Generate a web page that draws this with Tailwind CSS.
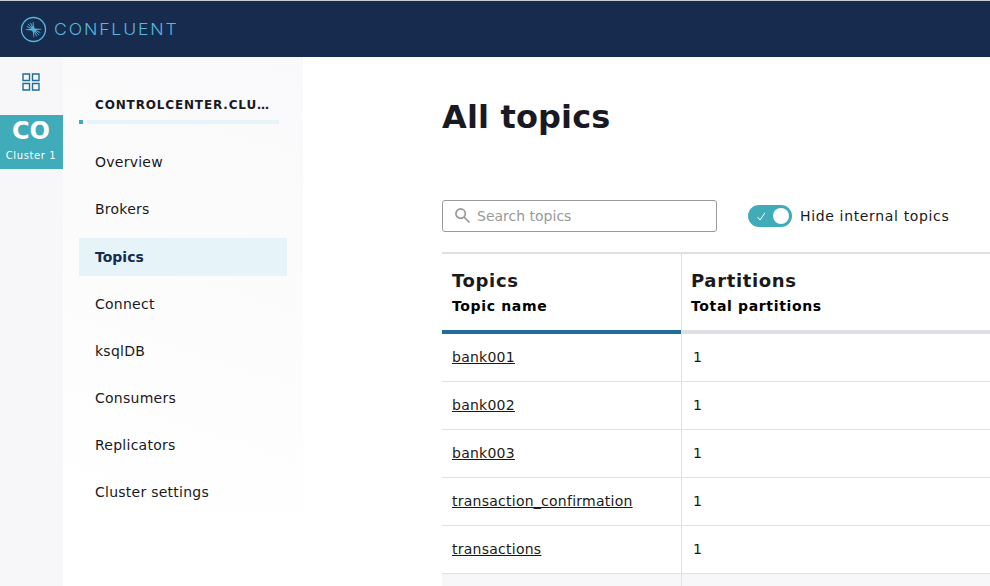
<!DOCTYPE html>
<html lang="en">
<head>
<meta charset="utf-8">
<title>All topics</title>
<script src="https://cdn.jsdelivr.net/npm/@tailwindcss/browser@4"></script>
</head>
<body class="flex h-screen flex-col overflow-hidden bg-white font-['DejaVu_Sans',sans-serif] text-[14px] leading-5 text-[#191924]">
<header class="flex h-[57px] shrink-0 items-center border-t border-[#c9cdd0] bg-[#172b4f] pl-5">
  <svg class="size-[27px]" viewBox="0 0 27 27" fill="none" stroke="#57b8dc">
    <circle cx="13.5" cy="13.5" r="12" stroke-width="1.3"/>
    <path d="M13.200 5.800Q13.700 12.500 15 12.700L21.300 13.300 14.600 14.200Q13.900 15 13.800 21.300 13.300 15 12.200 14.400L5.800 13.500 12.500 12.700Z" fill="#57b8dc" stroke-width=".4"/>
    <path d="M12.500 12.500 7.800 7.800M12.700 12 10.400 6.700M12 12.700 6.700 10.400M14.500 14.500l4.700 4.700M14.300 15l2.300 5.300M15 14.300l5.300 2.300" stroke-width=".9"/>
  </svg>
  <span class="ml-[7px] origin-left scale-x-110 font-['Inter',sans-serif] text-[16px] leading-[57px] font-light tracking-[1.700px] text-[#57b8dc]">CONFLUENT</span>
</header>
<div class="flex min-h-0 flex-1">
  <nav class="flex w-[63px] shrink-0 flex-col bg-[#f7f7fa]">
    <div class="flex h-[58px] pt-4 pl-[22px]">
      <svg class="size-[18px]" viewBox="0 0 18 18" fill="none" stroke="#206e98" stroke-width="1.400"><path d="M1 1h6.500v6.500H1zM10.500 1H17v6.500h-6.500zM1 10.500h6.500V17H1zM10.500 10.500H17V17h-6.500z"/></svg>
    </div>
    <a class="flex h-[54px] flex-col items-center bg-[#40abb9] text-white">
      <span class="-ml-px h-[31px] text-[24px] leading-[33px] font-bold">CO</span>
      <span class="-ml-px text-[10px] leading-5 tracking-[0.6px]">Cluster 1</span>
    </a>
  </nav>
  <aside class="h-[455px] w-60 shrink-0 bg-linear-[197deg,#f9f9fb,#fbfbfb_35%,#ffffff] px-4 pt-[38px]">
    <div class="pl-4 text-[12px] font-bold tracking-[0.85px]">CONTROLCENTER.CLU…</div>
    <div class="mt-[5px] flex h-1 w-[200px] gap-1"><i class="w-1 bg-[#40abb9]"></i><i class="flex-1 bg-[#e6f4fa]"></i></div>
    <ul class="mt-[19px] flex w-52 flex-col gap-[9.150px] tracking-[0.250px] *:flex *:h-[38px] *:items-center *:pl-4">
      <li>Overview</li>
      <li>Brokers</li>
      <li class="relative top-[0.700px] bg-[#e6f4fa] font-bold tracking-normal text-[#172b4f]">Topics</li>
      <li class="relative top-[0.500px]">Connect</li>
      <li>ksqlDB</li>
      <li>Consumers</li>
      <li>Replicators</li>
      <li>Cluster settings</li>
    </ul>
  </aside>
  <main class="flex min-w-0 flex-1 flex-col pl-[139px]">
    <h1 class="mt-10 text-[32px] leading-10 font-bold tracking-[0.150px]">All topics</h1>
    <div class="mt-[63px] flex h-8 shrink-0 items-center">
      <label class="flex h-8 w-[275px] items-center rounded-[3px] border border-[#999] pl-3 text-[#999]">
        <svg class="mr-1.5 size-4" viewBox="0 0 16 16" fill="none" stroke="#999" stroke-width="1.700"><circle cx="5.600" cy="5.600" r="4.700"/><path d="m9 9 5.500 5.500"/></svg>
        <span>Search topics</span>
      </label>
      <span class="ml-[31px] flex h-[22px] w-11 items-center justify-between rounded-full bg-[#40abb9] pr-[3px] pl-[9px]">
        <svg class="size-[9px]" viewBox="0 0 9 9" fill="none" stroke="#fff"><path d="m.5 5 2.500 3L8 .8"/></svg>
        <i class="size-4 rounded-full bg-white"></i>
      </span>
      <span class="ml-2 tracking-[0.650px]">Hide internal topics</span>
    </div>
    <section class="mt-5 grid shrink-0 grid-cols-[239px_1fr] border-t-2 border-[#dfe0e6] text-[#1a1a1a]">
      <div class="h-20 border-b-4 border-b-[#206e98] pt-[15px] pl-[10px]">
        <h2 class="text-[18px] leading-6 font-bold tracking-[0.650px]">Topics</h2>
        <p class="mt-[3px] font-bold tracking-[0.650px] text-black">Topic name</p>
      </div>
      <div class="h-20 border-b-4 border-l border-[#dfe0e6] pt-[15px] pl-[9px]">
        <h2 class="text-[18px] leading-6 font-bold tracking-[0.650px]">Partitions</h2>
        <p class="mt-[3px] font-bold tracking-[0.650px] text-black">Total partitions</p>
      </div>
    </section>
    <section class="grid min-h-0 flex-1 grid-cols-[239px_1fr] grid-rows-[repeat(5,48px)_1fr] tracking-[0.250px] text-[#1a1a1a] *:border-b *:border-[#dfe0e6] *:leading-[47px] *:odd:pl-[10px] *:even:border-l *:even:pl-[11px] [&_a]:underline [&_a]:underline-offset-1 [&_a]:[text-decoration-skip-ink:none]">
      <div><a>bank001</a></div><div>1</div>
      <div><a>bank002</a></div><div>1</div>
      <div><a>bank003</a></div><div>1</div>
      <div><a>transaction_confirmation</a></div><div>1</div>
      <div><a>transactions</a></div><div>1</div>
      <div class="border-b-0! bg-[#f7f7fa]"></div><div class="border-b-0! bg-[#f7f7fa]"></div>
    </section>
  </main>
</div>
</body>
</html>
